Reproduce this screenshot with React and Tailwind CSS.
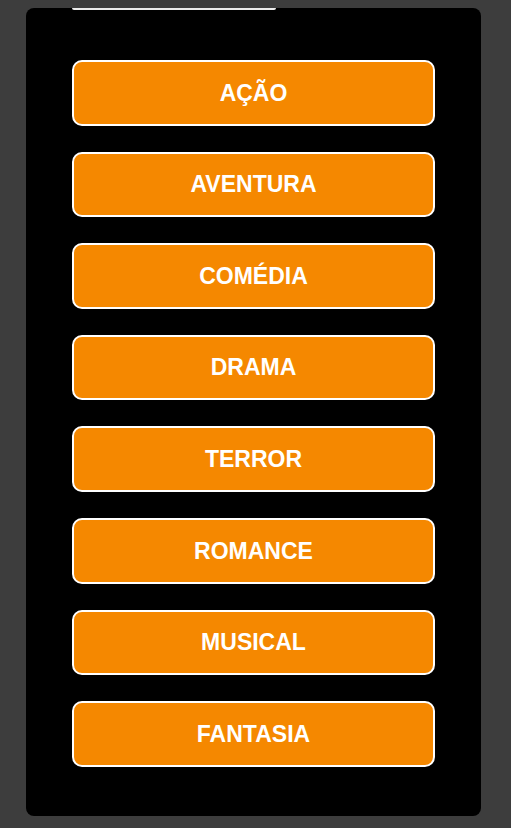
import React from 'react';

const genres = ['AÇÃO', 'AVENTURA', 'COMÉDIA', 'DRAMA', 'TERROR', 'ROMANCE', 'MUSICAL', 'FANTASIA'];

export default function App() {
  return (
    <div className="min-h-[828px] w-full bg-[#3d3d3d] pt-[8px] pb-[12px]" style={{ fontFamily: '"Liberation Sans", Arial, sans-serif' }}>
      <div className="ml-[26px] w-[455px] h-[808px] bg-black rounded-[8px] overflow-hidden">
        {/* remnant of the scrolled-out header */}
        <div className="ml-[46px] w-[204px] h-[2px] bg-[#ececec] rounded-b-[2px]" />

        <div className="flex flex-col gap-[26px] px-[46px] pt-[50px]">
          {genres.map((g) => (
            <button
              key={g}
              className="h-[65.6px] w-full flex items-center justify-center bg-[#f58800] border-2 border-white rounded-[10px] text-white font-bold text-[23px]"
            >
              {g}
            </button>
          ))}
        </div>
      </div>
    </div>
  );
}
